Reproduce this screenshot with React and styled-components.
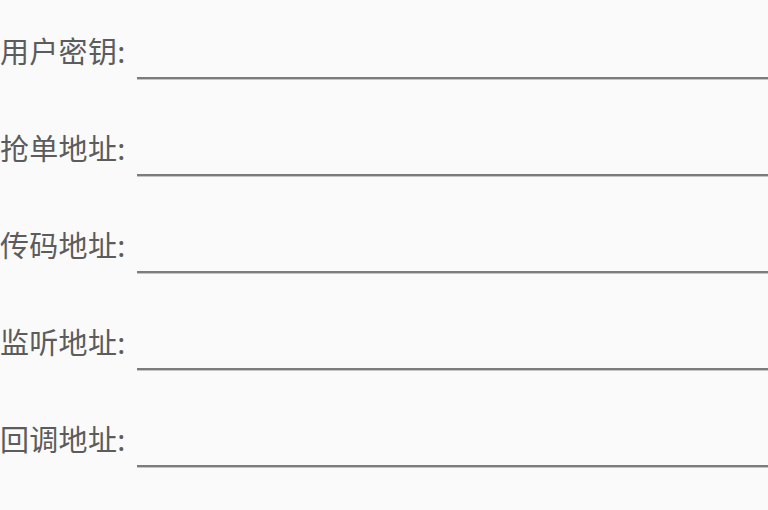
import React from 'react';
import styled, { createGlobalStyle } from 'styled-components';

const GlobalStyle = createGlobalStyle`
    body {
        margin: 0;
        background-color: #fafafa;
        font-family: "Noto Sans CJK SC", "Noto Sans", sans-serif;
    }
`

const Form = styled.div`
    width: 768px;
    height: 510px;
    overflow: hidden;
    display: flex;
    flex-direction: column;
`

const Row = styled.div`
    height: 97px;
    display: flex;
    align-items: center;
    flex-shrink: 0;
`

const Label = styled.label`
    width: 137px;
    flex-shrink: 0;
    font-size: 29px;
    line-height: 1;
    color: #5c5c5c;
    white-space: nowrap;
    letter-spacing: 0.3px;
    margin-top: 3px;
`

const Field = styled.input`
    flex: 1;
    min-width: 0;
    align-self: flex-end;
    margin-bottom: 18px;
    height: 40px;
    padding: 0;
    border: none;
    border-bottom: 2px solid #7c7c7c;
    box-shadow: 0 1px 0 #c4c4c4;
    background: transparent;
    outline: none;
    font-size: 24px;
    font-family: inherit;
`

const fields = ['用户密钥', '抢单地址', '传码地址', '监听地址', '回调地址'];

function App() {
    return (
        <>
            <GlobalStyle />
            <Form>
                {fields.map(name => (
                    <Row key={name}>
                        <Label>{name}:</Label>
                        <Field type="text" />
                    </Row>
                ))}
            </Form>
        </>
    );
}

export default App;
